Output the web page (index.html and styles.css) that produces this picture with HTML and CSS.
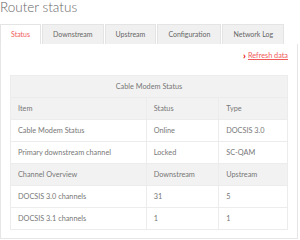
FILE: index.html
```html
<!DOCTYPE html>
<html lang="en">

<head>
    <meta charset="UTF-8">
    <meta name="viewport" content="width=device-width, initial-scale=1.0">
    <title>Router status</title>
    <link rel="stylesheet" href="styles.css">
</head>

<body>
    <h1 class="title">Router status</h1>
    <ul class="tabs">
        <li class="tab active">Status</li>
        <li class="tab">Downstream</li>
        <li class="tab">Upstream</li>
        <li class="tab">Configuration</li>
        <li class="tab">Network Log</li>
    </ul>
    <div class="panel">
        <div class="refresh">
            <span class="chevron">&#8250;</span><a href="#" class="refresh-link">Refresh data</a>
        </div>
        <table class="status-table">
            <thead>
                <tr>
                    <th colspan="3" class="caption">Cable Modem Status</th>
                </tr>
                <tr>
                    <th class="col-item">Item</th>
                    <th class="col-small">Status</th>
                    <th class="col-small">Type</th>
                </tr>
            </thead>
            <tbody>
                <tr>
                    <td>Cable Modem Status</td>
                    <td>Online</td>
                    <td>DOCSIS 3.0</td>
                </tr>
                <tr>
                    <td>Primary downstream channel</td>
                    <td>Locked</td>
                    <td>SC-QAM</td>
                </tr>
                <tr class="sub-head">
                    <th>Channel Overview</th>
                    <th>Downstream</th>
                    <th>Upstream</th>
                </tr>
                <tr>
                    <td>DOCSIS 3.0 channels</td>
                    <td>31</td>
                    <td>5</td>
                </tr>
                <tr>
                    <td>DOCSIS 3.1 channels</td>
                    <td>1</td>
                    <td>1</td>
                </tr>
            </tbody>
        </table>
    </div>
</body>

</html>
```

FILE: styles.css
```css
body {
    margin: 0;
    font-family: Lato, "Open Sans", Arial, sans-serif;
    color: #777;
    background-color: white;
}

.title {
    margin: 0;
    height: 24px;
    font-size: 13.5px;
    font-weight: 300;
    line-height: 15px;
    color: #666;
}

.tabs {
    display: flex;
    gap: 1px;
    margin: 0;
    padding: 0;
    list-style: none;
}

.tab {
    height: 19px;
    padding: 0 10px;
    font-size: 7px;
    line-height: 19px;
    white-space: nowrap;
    background-color: #f0f0f0;
    border: 1px solid #e4e4e4;
    border-bottom: none;
    color: #666;
}

.tab.active {
    background-color: white;
    color: #f05a5a;
}

.panel {
    width: 278px;
    padding: 0 9px 8px 9px;
    border: 1px solid #e6e6e6;
    border-top: none;
}

.refresh {
    height: 31px;
    display: flex;
    justify-content: flex-end;
    align-items: flex-start;
    gap: 2px;
    padding: 7px 0 0 0;
    box-sizing: border-box;
    font-size: 7.3px;
}

.chevron {
    color: #e60000;
    font-weight: bold;
    font-size: 10px;
    line-height: 9px;
}

.refresh-link {
    color: #f05a5a;
    line-height: 10px;
}

.status-table {
    width: 100%;
    border-collapse: collapse;
    font-size: 7.3px;
}

th,
td {
    height: 21px;
    padding: 0 7px;
    border: 1px solid #ececec;
    text-align: left;
    font-weight: normal;
    color: #777;
}

th {
    background-color: #f2f2f2;
}

.caption {
    text-align: center;
}

.col-item {
    width: 49%;
}
```
